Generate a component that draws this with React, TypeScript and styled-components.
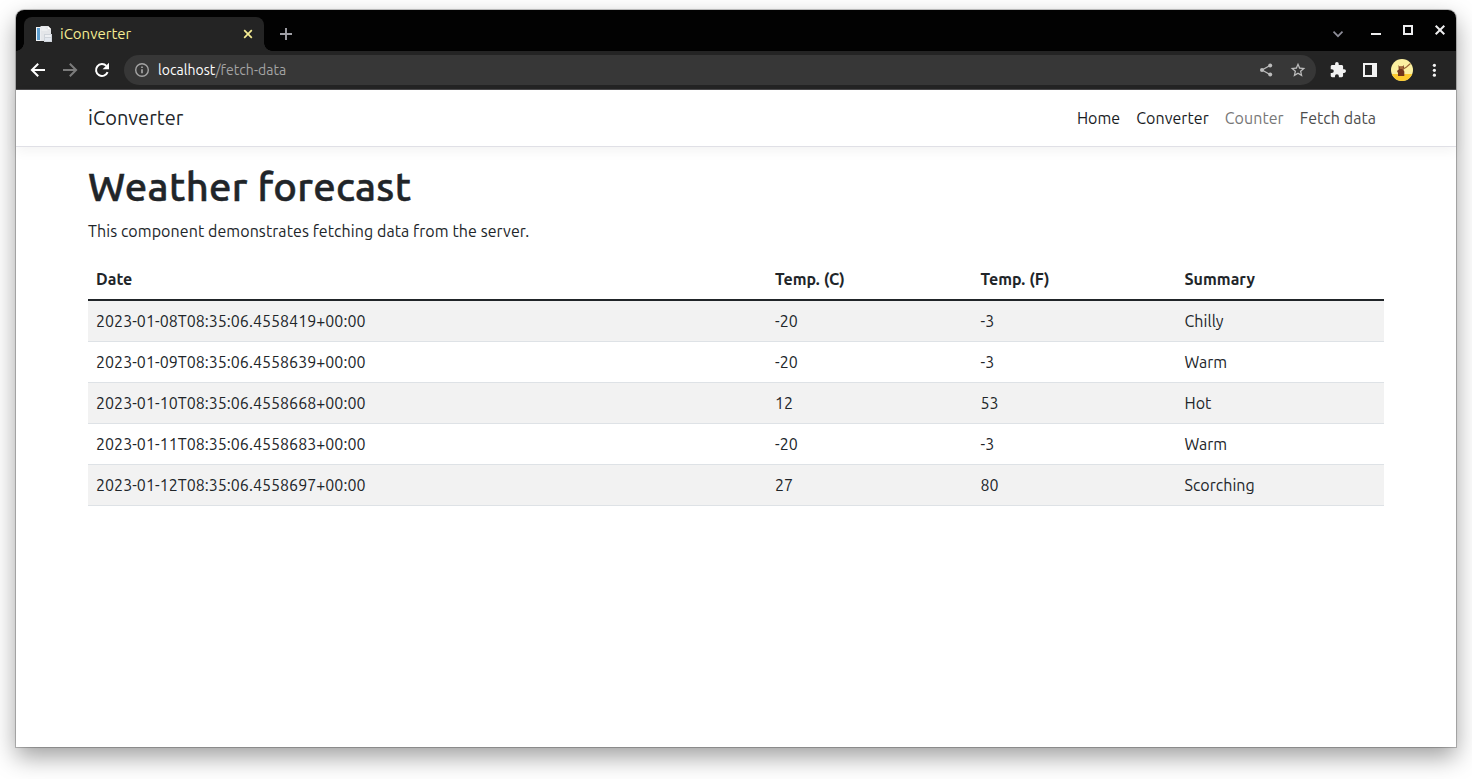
import React from 'react';
import styled, { createGlobalStyle } from 'styled-components';

const GlobalStyle = createGlobalStyle`
  *, *::before, *::after { box-sizing: border-box; }
  body {
    margin: 0;
    background: #fff;
    color: #212529;
    font-family: 'Ubuntu', 'Noto Sans', sans-serif;
    font-size: 16px;
    line-height: 24px;
    overflow: hidden;
  }
`;

const Desktop = styled.div`
  height: 779px;
  padding: 10px 16px 32px;
`;

const Window = styled.div`
  display: flex;
  flex-direction: column;
  height: 737px;
  border-radius: 8px 8px 0 0;
  background: #fff;
  box-shadow: 0 0 0 1px rgba(0, 0, 0, 0.2), 0 0 3px rgba(0, 0, 0, 0.08),
    0 10px 24px rgba(0, 0, 0, 0.38);
`;

const TabStrip = styled.div`
  display: flex;
  justify-content: space-between;
  height: 41px;
  padding: 7px 8px 0;
  border-radius: 8px 8px 0 0;
  background: #020202;
`;

const TabGroup = styled.div`
  display: flex;
  align-items: stretch;
`;

const Tab = styled.div`
  position: relative;
  display: flex;
  align-items: center;
  width: 240px;
  padding: 0 10px 0 12px;
  border-radius: 8px 8px 0 0;
  background: #242424;
  color: #f6ed93;

  &::before,
  &::after {
    content: '';
    position: absolute;
    bottom: 0;
    width: 8px;
    height: 8px;
  }
  &::before {
    right: 100%;
    background: radial-gradient(circle at 0 0, transparent 7.5px, #242424 8px);
  }
  &::after {
    left: 100%;
    background: radial-gradient(circle at 100% 0, transparent 7.5px, #242424 8px);
  }
`;

const TabTitle = styled.span`
  flex: 1;
  margin-left: 8px;
  font-size: 15px;
  line-height: 20px;
`;

const Icon = styled.svg`
  display: block;
  flex: none;
`;

const NewTab = styled.div`
  display: flex;
  align-items: center;
  margin-left: 14px;
`;

const WindowControls = styled.div`
  display: flex;
  gap: 16px;
  height: 26px;
  align-items: center;
`;

const TabSearch = styled(Icon)`
  margin-right: 6px;
`;

const Toolbar = styled.div`
  display: flex;
  align-items: center;
  height: 39px;
  padding: 0 11px 0 14px;
  border-bottom: 1px solid #4b4a4c;
  background: #242424;
`;

const NavButtons = styled.div`
  display: flex;
  gap: 16px;
  margin-right: 14px;
`;

const AddressBar = styled.div`
  display: flex;
  flex: 1;
  align-items: center;
  height: 30px;
  padding: 0 10px;
  border-radius: 15px;
  background: #373737;
  font-size: 14px;
  line-height: 20px;
`;

const Url = styled.span`
  flex: 1;
  margin-left: 8px;
  color: #a4a4a4;
  letter-spacing: 0.05px;
`;

const Host = styled.span`
  color: #fff;
`;

const AddressActions = styled.div`
  display: flex;
  gap: 16px;
`;

const Extensions = styled.div`
  display: grid;
  grid-template-columns: repeat(4, 22px);
  align-items: center;
  justify-items: center;
  gap: 10px;
  margin-left: 11px;
`;

const NavBar = styled.header`
  display: flex;
  align-items: center;
  justify-content: space-between;
  height: 57px;
  margin-bottom: 16px;
  padding: 0 80px 0 72px;
  border-bottom: 1px solid #e0e0e6;
  box-shadow: 0 4px 12px rgba(0, 0, 0, 0.05);
`;

const Brand = styled.span`
  font-size: 20px;
  letter-spacing: 0.04px;
`;

const Links = styled.nav`
  display: flex;
  gap: 16px;
  letter-spacing: 0.05px;
`;

const NavLink = styled.a<{ $color: string }>`
  color: ${({ $color }) => $color};
`;

const Content = styled.main`
  padding: 0 72px;
`;

const Title = styled.h1`
  margin: 0 0 8px;
  font-size: 40px;
  font-weight: 500;
  line-height: 48px;
  letter-spacing: 0.3px;
  -webkit-text-stroke: 0.5px currentColor;
`;

const Lead = styled.p`
  margin: 0 0 16px;
  letter-spacing: 0.075px;
`;

const Table = styled.table`
  width: 100%;
  border-collapse: collapse;
  table-layout: fixed;
  letter-spacing: 0.03px;

  tbody tr:nth-child(odd) {
    background: #f2f2f2;
  }
`;

const Column = styled.col<{ $width: string }>`
  width: ${({ $width }) => $width};
`;

const HeadCell = styled.th`
  height: 41px;
  padding: 8px;
  border-bottom: 2px solid #212529;
  text-align: left;
`;

const Cell = styled.td`
  height: 41px;
  padding: 8px;
  border-bottom: 1px solid #dee2e6;
`;

const forecasts = [
  ['2023-01-08T08:35:06.4558419+00:00', '-20', '-3', 'Chilly'],
  ['2023-01-09T08:35:06.4558639+00:00', '-20', '-3', 'Warm'],
  ['2023-01-10T08:35:06.4558668+00:00', '12', '53', 'Hot'],
  ['2023-01-11T08:35:06.4558683+00:00', '-20', '-3', 'Warm'],
  ['2023-01-12T08:35:06.4558697+00:00', '27', '80', 'Scorching'],
];

const Favicon = () => (
  <Icon width="16" height="16" viewBox="0 0 16 16">
    <path d="M0 1h8v14H0z" fill="#f4f6f8" />
    <path d="M1 2h3v12H1z" fill="#5e9fd0" />
    <path d="M4.500 0H12l3 3v12H4.500z" fill="#e4e6e9" />
    <path d="M12 0v3h3z" fill="#fff" />
    <path d="M5.500 2h4M5.500 4h6" stroke="#f6f7f8" />
    <path d="M8 8h8v8H8z" fill="#cfd4da" />
    <path d="M9 9h6v2H9z" fill="#eef0f3" />
    <path d="M9 12h6v3H9z" fill="#e2e7ee" />
  </Icon>
);

const Avatar = () => (
  <Icon width="22" height="22" viewBox="0 0 22 22">
    <clipPath id="avatar">
      <circle cx="11" cy="11" r="11" />
    </clipPath>
    <g clipPath="url(#avatar)">
      <path d="M0 0h22v22H0z" fill="#fbf0a0" />
      <path d="M0 15h22v7H0z" fill="#fcca2e" />
      <path d="M7.500 6l1 1.500h3l1-1.500.5 3-.7 1.800 1 1.700v4.500H7V14l-1-2 1.700-1.500z" fill="#71351c" />
      <path d="M8.500 7.500h3.500v2.500H8.500z" fill="#a46739" />
      <path d="M11.500 10.500l4-2.500 4-3.500" stroke="#9a6334" strokeWidth="1.100" fill="none" />
    </g>
  </Icon>
);

export default function App() {
  return (
    <Desktop>
      <GlobalStyle />
      <Window>
        <TabStrip>
          <TabGroup>
            <Tab>
              <Favicon />
              <TabTitle>iConverter</TabTitle>
              <Icon width="12" height="12" viewBox="0 0 12 12" stroke="#f6ed93" strokeWidth="1.700">
                <path d="M2.200 2.200l7.600 7.600M9.800 2.200l-7.600 7.600" />
              </Icon>
            </Tab>
            <NewTab>
              <Icon width="16" height="16" viewBox="0 0 16 16" stroke="#a0a0a6" strokeWidth="1.900">
                <path d="M8 2v12M2 8h12" />
              </Icon>
            </NewTab>
          </TabGroup>
          <WindowControls>
            <TabSearch width="16" height="16" viewBox="0 0 16 16" fill="none" stroke="#8d8d98" strokeWidth="1.700">
              <path d="M3.500 9.700L8 14.200l4.500-4.500" />
            </TabSearch>
            <Icon width="16" height="16" viewBox="0 0 16 16" fill="none" stroke="#ededee" strokeWidth="2">
              <path d="M3 12h10" />
            </Icon>
            <Icon width="16" height="16" viewBox="0 0 16 16" fill="none" stroke="#ededee" strokeWidth="2">
              <path d="M4 4h8v8H4z" />
            </Icon>
            <Icon width="16" height="16" viewBox="0 0 16 16" fill="none" stroke="#ededee" strokeWidth="2">
              <path d="M3.700 3.700l8.600 8.600M12.300 3.700l-8.600 8.600" />
            </Icon>
          </WindowControls>
        </TabStrip>

        <Toolbar>
          <NavButtons>
            <Icon width="16" height="16" viewBox="0 0 16 16" fill="none" stroke="#fff" strokeWidth="2">
              <path d="M15 8H2.500M8.200 1.700L1.900 8l6.300 6.300" />
            </Icon>
            <Icon width="16" height="16" viewBox="0 0 16 16" fill="none" stroke="#7b7b7b" strokeWidth="2">
              <path d="M1 8h12.500M7.800 1.700L14.100 8l-6.300 6.300" />
            </Icon>
            <Icon width="16" height="16" viewBox="0 0 16 16" fill="none">
              <path d="M13.600 10.200A6 6 0 1 1 12.400 3.900" stroke="#fff" strokeWidth="2" />
              <path d="M15 .8V7.200H8.600z" fill="#fff" />
            </Icon>
          </NavButtons>
          <AddressBar>
            <Icon width="16" height="16" viewBox="0 0 16 16" fill="none" stroke="#a4a4a4">
              <circle cx="8" cy="8" r="6.300" strokeWidth="1.400" />
              <path d="M8 7.200v4M8 4.400v1.600" strokeWidth="1.700" />
            </Icon>
            <Url>
              <Host>localhost</Host>/fetch-data
            </Url>
            <AddressActions>
              <Icon width="16" height="16" viewBox="0 0 16 16" fill="#bcbcbc" stroke="#bcbcbc">
                <path d="M12 3.500L4 8l8 4.500" fill="none" strokeWidth="1.300" />
                <g stroke="none">
                  <circle cx="12.200" cy="3.500" r="2" />
                  <circle cx="4" cy="8" r="2" />
                  <circle cx="12.200" cy="12.500" r="2" />
                </g>
              </Icon>
              <Icon width="16" height="16" viewBox="0 0 24 24" fill="#bcbcbc">
                <path d="M23 8.900l-7.900-.7L12 1 8.900 8.300 1 8.900l6 5.200L5.200 22l6.800-4.100 6.800 4.100-1.800-7.900zM12 15.700l-4 2.400 1.100-4.600-3.500-3 4.700-.4L12 5.800l1.700 4.300 4.700.4-3.500 3 1.100 4.600z" />
              </Icon>
            </AddressActions>
          </AddressBar>
          <Extensions>
            <Icon width="16" height="16" viewBox="1 1 22 22" fill="#f2f2f2">
              <path d="M20.500 11H19V7c0-1.100-.9-2-2-2h-4V3.500a2.500 2.500 0 0 0-5 0V5H4c-1.100 0-2 .9-2 2v3.800h1.500a2.700 2.700 0 0 1 0 5.400H2V20c0 1.100.9 2 2 2h3.800v-1.500a2.700 2.700 0 0 1 5.400 0V22H17c1.100 0 2-.9 2-2v-4h1.500a2.500 2.500 0 0 0 0-5z" />
            </Icon>
            <Icon width="16" height="16" viewBox="0 0 16 16">
              <path d="M2 2h12v12H2z" fill="none" stroke="#f2f2f2" strokeWidth="2" />
              <path d="M10 1h5v14h-5z" fill="#f2f2f2" />
            </Icon>
            <Avatar />
            <Icon width="16" height="16" viewBox="0 0 16 16" fill="#f2f2f2">
              <circle cx="8.400" cy="3.300" r="1.600" />
              <circle cx="8.400" cy="8.300" r="1.600" />
              <circle cx="8.400" cy="13.200" r="1.600" />
            </Icon>
          </Extensions>
        </Toolbar>

        <NavBar>
          <Brand>iConverter</Brand>
          <Links>
            <NavLink $color="#191c1f">Home</NavLink>
            <NavLink $color="#191c1f">Converter</NavLink>
            <NavLink $color="#777">Counter</NavLink>
            <NavLink $color="#4d4d4d">Fetch data</NavLink>
          </Links>
        </NavBar>

        <Content>
          <Title>Weather forecast</Title>
          <Lead>This component demonstrates fetching data from the server.</Lead>
          <Table>
            <colgroup>
              <Column $width="679px" />
              <Column $width="205.500px" />
              <Column $width="204px" />
              <Column $width="auto" />
            </colgroup>
            <thead>
              <tr>
                <HeadCell>Date</HeadCell>
                <HeadCell>Temp. (C)</HeadCell>
                <HeadCell>Temp. (F)</HeadCell>
                <HeadCell>Summary</HeadCell>
              </tr>
            </thead>
            <tbody>
              {forecasts.map(([date, celsius, fahrenheit, summary]) => (
                <tr key={date}>
                  <Cell>{date}</Cell>
                  <Cell>{celsius}</Cell>
                  <Cell>{fahrenheit}</Cell>
                  <Cell>{summary}</Cell>
                </tr>
              ))}
            </tbody>
          </Table>
        </Content>
      </Window>
    </Desktop>
  );
}
